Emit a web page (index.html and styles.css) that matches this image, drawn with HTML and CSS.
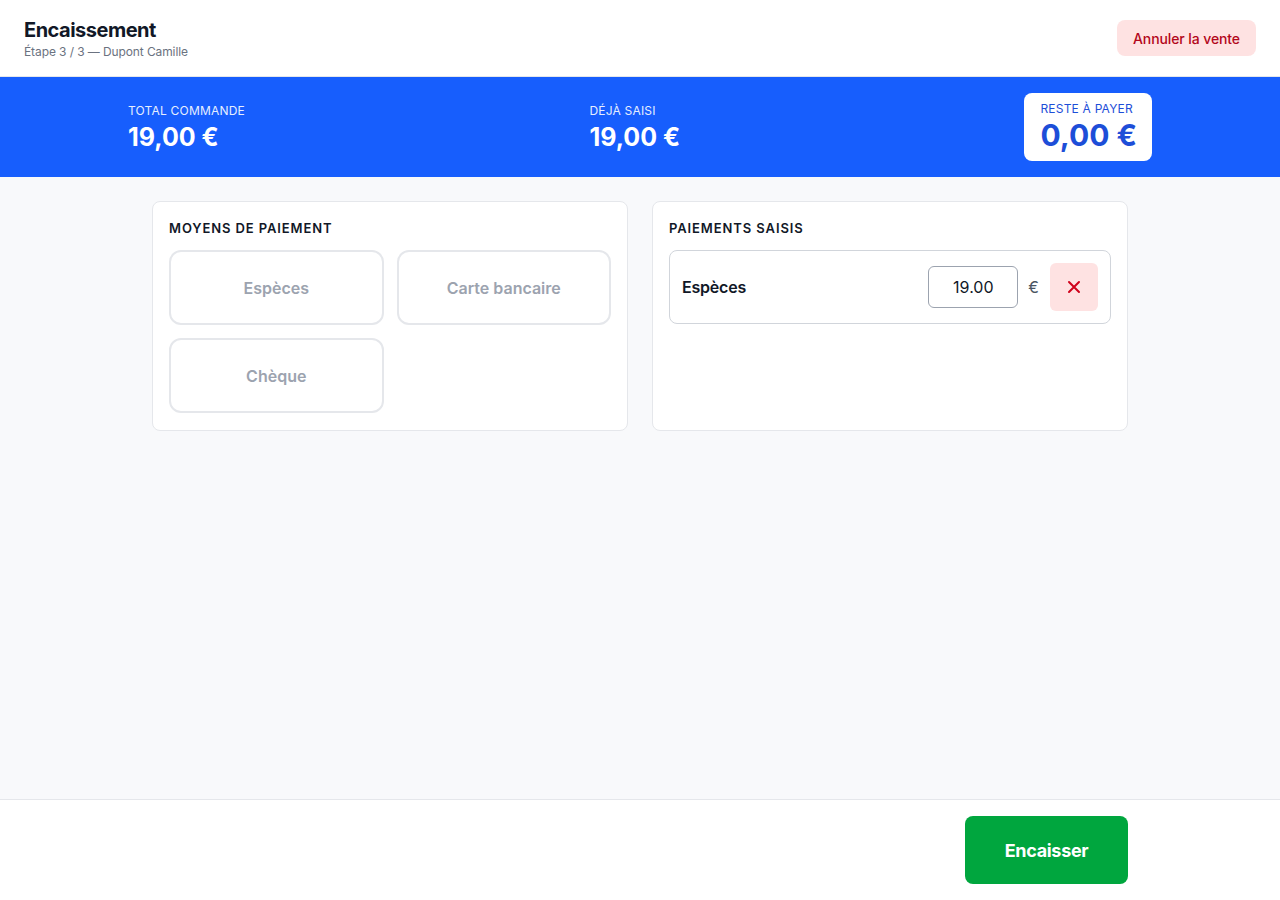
FILE: index.html
```html
<!DOCTYPE html>
<html lang="fr">
<head>
    <meta charset="UTF-8">
    <meta name="viewport" content="width=device-width, initial-scale=1.0">
    <title>Encaissement</title>
    <link rel="stylesheet" href="styles.css">
</head>
<body>
    <section id="page">
        <header id="topbar">
            <div>
                <h1>Encaissement</h1>
                <p class="subtitle">Étape 3 / 3 — Dupont Camille</p>
            </div>
            <button class="cancel">Annuler la vente</button>
        </header>

        <section id="totals">
            <div class="totalsinner">
                <div class="total">
                    <span class="label">Total commande</span>
                    <span class="value">19,00 €</span>
                </div>
                <div class="total">
                    <span class="label">Déjà saisi</span>
                    <span class="value">19,00 €</span>
                </div>
                <div class="total remaining">
                    <span class="label">Reste à payer</span>
                    <span class="value">0,00 €</span>
                </div>
            </div>
        </section>

        <main id="content">
            <section class="card">
                <h2>Moyens de paiement</h2>
                <div class="methods">
                    <button class="method" disabled>Espèces</button>
                    <button class="method" disabled>Carte bancaire</button>
                    <button class="method" disabled>Chèque</button>
                </div>
            </section>
            <section class="card">
                <h2>Paiements saisis</h2>
                <div class="payment">
                    <span class="paymentname">Espèces</span>
                    <input class="amount" type="text" value="19.00">
                    <span class="currency">€</span>
                    <button class="remove" aria-label="Supprimer">
                        <svg width="14" height="14" viewBox="0 0 14 14"><path d="M2 2L12 12M12 2L2 12" stroke="#d0021b" stroke-width="2" stroke-linecap="round"/></svg>
                    </button>
                </div>
            </section>
        </main>

        <footer id="bottombar">
            <div class="bottominner">
                <button class="checkout">Encaisser</button>
            </div>
        </footer>
    </section>
</body>
</html>
```

FILE: styles.css
```css
*{
    padding:0;
    margin:0;
    box-sizing: border-box;
}
body{
    font-family: Inter, "Noto Sans", sans-serif;
    color:#111827;
    background-color:#f8f9fb;
}
button, input{
    font-family:inherit;
}
#page{
    height:900px;
    display:flex;
    flex-direction:column;
}
#topbar{
    height:77px;
    background-color:white;
    border-bottom:1px solid #e5e7eb;
    padding:0 24px;
    display:flex;
    justify-content:space-between;
    align-items:center;
}
#topbar h1{
    font-size:20px;
    font-weight:700;
    line-height:24px;
    letter-spacing:-0.5px;
    margin-top:2px;
}
.subtitle{
    font-size:12px;
    color:#6b7280;
    line-height:18px;
    margin-top:1px;
    letter-spacing:-0.1px;
}
.cancel{
    background-color:#fee2e2;
    color:#b3071b;
    border:none;
    border-radius:8px;
    font-size:14px;
    font-weight:500;
    height:36px;
    padding:0 16px;
    letter-spacing:-0.1px;
}
#totals{
    background-color:#175efd;
    padding:16px 0;
}
.totalsinner{
    width:1024px;
    margin:0 auto;
    display:flex;
    justify-content:space-between;
    align-items:center;
    height:68px;
}
.total{
    display:flex;
    flex-direction:column;
    color:white;
}
.total .label{
    font-size:12px;
    text-transform:uppercase;
    letter-spacing:0.2px;
    line-height:16px;
    color:#e6eeff;
    margin-top:1px;
}
.total .value{
    font-size:25px;
    font-weight:700;
    line-height:32px;
    margin-top:2px;
}
.total.remaining{
    background-color:white;
    border-radius:8px;
    padding:8px 15px 8px 16px;
    color:#1d4ed8;
}
.total.remaining .label{
    color:#1d4ed8;
    margin-top:0;
}
.total.remaining .value{
    font-size:30px;
    line-height:36px;
    margin-top:0;
}
#content{
    flex-grow:1;
    width:976px;
    margin:0 auto;
    padding:24px 0;
    display:grid;
    grid-template-columns:1fr 1fr;
    gap:24px;
    align-items:start;
}
.card{
    background-color:white;
    border:1px solid #e5e7eb;
    border-radius:8px;
    padding:16px;
    height:230px;
}
.card h2{
    font-size:13px;
    font-weight:600;
    text-transform:uppercase;
    letter-spacing:0.9px;
    line-height:20px;
    margin-bottom:12px;
}
.methods{
    display:grid;
    grid-template-columns:1fr 1fr;
    gap:13px 13px;
}
.method{
    height:75px;
    background-color:white;
    border:2px solid #e5e7eb;
    border-radius:12px;
    font-size:16px;
    font-weight:600;
    color:#9ca3af;
}
.payment{
    border:1px solid #d1d5db;
    border-radius:8px;
    height:74px;
    padding:0 12px;
    display:flex;
    align-items:center;
}
.paymentname{
    flex-grow:1;
    font-size:16px;
    font-weight:600;
    letter-spacing:-0.2px;
}
.amount{
    width:90px;
    height:42px;
    border:1px solid #9ca3af;
    border-radius:6px;
    text-align:center;
    font-size:16px;
    color:#111827;
}
.currency{
    margin:0 11px 0 10px;
    font-size:16px;
    color:#4b5563;
}
.remove{
    width:48px;
    height:48px;
    border:none;
    border-radius:6px;
    background-color:#fee2e2;
    display:flex;
    align-items:center;
    justify-content:center;
}
#bottombar{
    background-color:white;
    border-top:1px solid #e5e7eb;
    padding:16px 0;
}
.bottominner{
    width:976px;
    margin:0 auto;
    display:flex;
    justify-content:flex-end;
}
.checkout{
    width:163px;
    height:68px;
    border:none;
    border-radius:8px;
    background-color:#00a63e;
    color:white;
    font-size:18px;
    font-weight:700;
    letter-spacing:-0.3px;
}
```
